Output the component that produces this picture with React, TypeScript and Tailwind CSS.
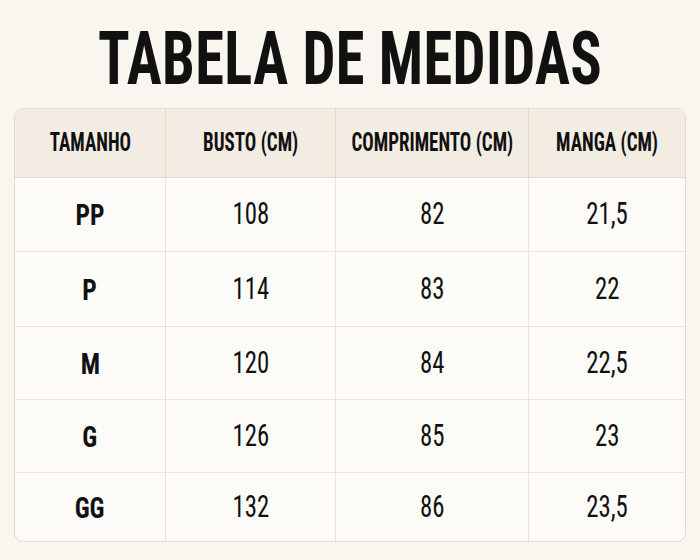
const rows = [
  { size: "PP", busto: "108", comp: "82", manga: "21,5", h: "h-[74px]" },
  { size: "P", busto: "114", comp: "83", manga: "22", h: "h-[75px]" },
  { size: "M", busto: "120", comp: "84", manga: "22,5", h: "h-[73px]" },
  { size: "G", busto: "126", comp: "85", manga: "23", h: "h-[73px]" },
  { size: "GG", busto: "132", comp: "86", manga: "23,5", h: "h-[68px]" },
];

const headers = ["TAMANHO", "BUSTO (CM)", "COMPRIMENTO (CM)", "MANGA (CM)"];
const cols = "grid grid-cols-[151px_170px_193px_156px]";

export default function App() {
  return (
    <div
      className="w-[700px] h-[560px] bg-[#f9f5ef] text-[#111111]"
      style={{ fontFamily: "'Roboto Condensed', 'Liberation Sans', sans-serif" }}
    >
      <div className="h-[108px] flex items-center justify-center pt-[9px]">
        <h1 className="inline-block whitespace-nowrap text-[74px] font-bold leading-none scale-x-[0.79] tracking-[0.5px]">
          TABELA DE MEDIDAS
        </h1>
      </div>

      <div className="mx-[14px] w-[672px] border border-[#e6d9c8] rounded-[9px] overflow-hidden bg-[#fdfbf8]">
        <div className={`${cols} h-[69px] bg-[#f3ece3] border-b border-[#e6d9c8]`}>
          {headers.map((h, i) => (
            <div
              key={h}
              className={`flex items-center justify-center ${i < 3 ? "border-r border-[#e6d9c8]" : ""}`}
            >
              <span className="inline-block whitespace-nowrap text-[25px] font-bold scale-x-[0.76]">{h}</span>
            </div>
          ))}
        </div>

        {rows.map((r, ri) => (
          <div
            key={r.size}
            className={`${cols} ${r.h} ${ri < rows.length - 1 ? "border-b border-[#ece2d6]" : ""}`}
          >
            <div className="flex items-center justify-center border-r border-[#ece2d6]">
              <span className="inline-block text-[30px] font-bold scale-x-[0.85]">{r.size}</span>
            </div>
            {[r.busto, r.comp, r.manga].map((v, i) => (
              <div
                key={i}
                className={`flex items-center justify-center ${i < 2 ? "border-r border-[#ece2d6]" : ""}`}
              >
                <span className="inline-block text-[31px] font-normal scale-x-[0.8]">{v}</span>
              </div>
            ))}
          </div>
        ))}
      </div>
    </div>
  );
}
